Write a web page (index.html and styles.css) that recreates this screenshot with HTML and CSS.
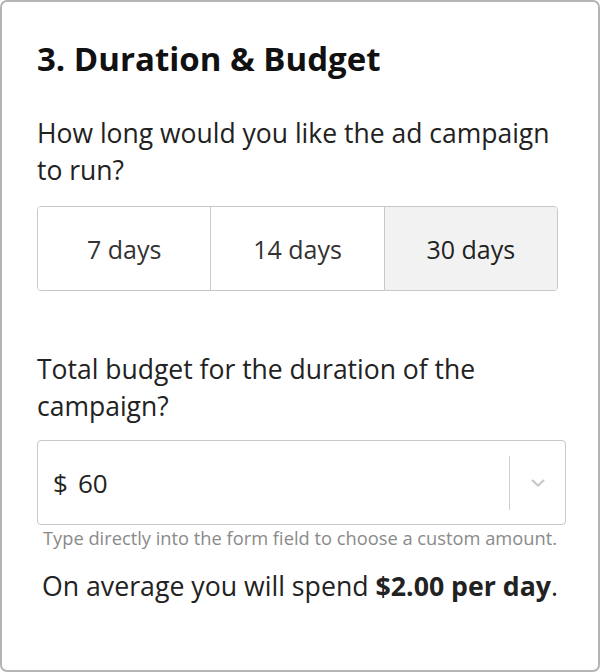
FILE: index.html
```html
<!DOCTYPE html>
<html lang="en">
<head>
    <meta charset="UTF-8">
    <meta name="viewport" content="width=device-width, initial-scale=1.0">
    <title>Duration &amp; Budget</title>
    <link rel="stylesheet" href="styles.css">
</head>
<body>
    <section class="card">
        <h2>3. Duration &amp; Budget</h2>
        <p class="question">How long would you like the ad campaign to run?</p>
        <div class="segments">
            <button class="segment">7 days</button>
            <button class="segment">14 days</button>
            <button class="segment selected">30 days</button>
        </div>

        <p class="question budget-question">Total budget for the duration of the campaign?</p>
        <div class="amount">
            <span class="currency">$</span>
            <span class="value">60</span>
            <span class="divider"></span>
            <span class="arrow">
                <svg width="16" height="10" viewBox="0 0 16 10">
                    <path d="M2 2 L8 7.5 L14 2" fill="none" stroke="#c8c8c8" stroke-width="2.2"/>
                </svg>
            </span>
        </div>
        <p class="hint">Type directly into the form field to choose a custom amount.</p>
        <p class="summary">On average you will spend <strong>$2.00 per day</strong>.</p>
    </section>
</body>
</html>
```

FILE: styles.css
```css
body {
    margin: 0;
    font-family: "Open Sans", Arial, sans-serif;
    color: #222;
    background-color: #fff;
}
.card {
    box-sizing: border-box;
    width: 600px;
    height: 672px;
    border: 2px solid #b4b4b4;
    border-radius: 7px;
    padding: 0 30px 0 35px;
}
h2 {
    margin: 35px 0 0;
    font-size: 33px;
    line-height: 44px;
    font-weight: 700;
    color: #111;
}
.question {
    margin: 34px 0 0;
    font-size: 26.5px;
    line-height: 37px;
}
.segments {
    display: flex;
    width: 521px;
    height: 85px;
    margin-top: 17px;
    border: 1px solid #c8c8c8;
    border-radius: 4px;
    overflow: hidden;
    box-sizing: border-box;
}
.segment {
    flex: 1;
    border: none;
    border-left: 1px solid #c8c8c8;
    background-color: #fff;
    font-family: inherit;
    font-size: 25px;
    color: #333;
    padding: 0;
    cursor: pointer;
}
.segment:first-child {
    border-left: none;
}
.segment.selected {
    background-color: #f2f2f2;
    color: #222;
}
.budget-question {
    margin-top: 60px;
}
.amount {
    display: flex;
    align-items: center;
    box-sizing: border-box;
    width: 529px;
    height: 85px;
    margin-top: 15px;
    border: 1px solid #c8c8c8;
    border-radius: 4px;
    padding-left: 15px;
    font-size: 26px;
}
.currency {
    margin-right: 10px;
}
.value {
    flex: 1;
}
.divider {
    width: 1px;
    height: 54px;
    background-color: #cfcfcf;
}
.arrow {
    display: flex;
    justify-content: center;
    width: 55px;
}
.hint {
    margin: 1px 0 0 -5px;
    text-align: center;
    font-size: 18.3px;
    line-height: 24px;
    color: #8a8a8a;
}
.summary {
    margin: 20px 0 0 -5px;
    text-align: center;
    font-size: 26.7px;
    line-height: 32px;
}
.summary strong {
    font-weight: 700;
}
```
